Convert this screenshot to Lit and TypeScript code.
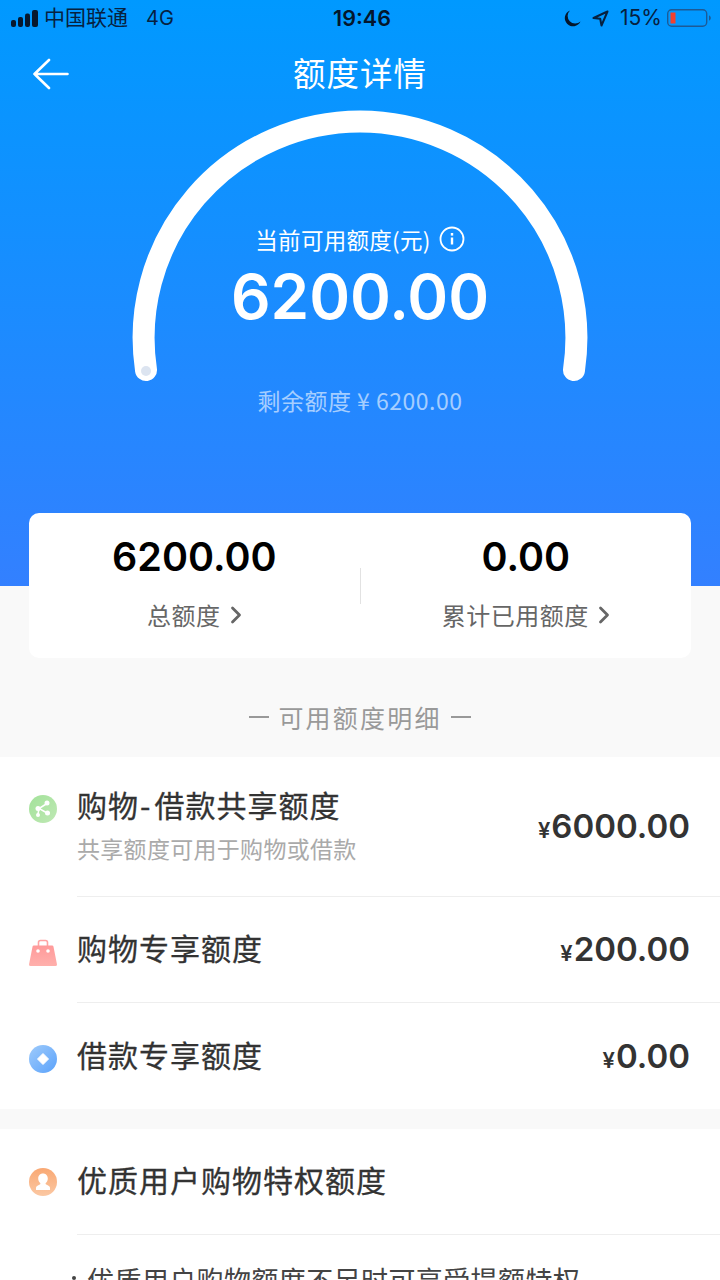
import { LitElement, css, html } from 'lit';
import { customElement } from 'lit/decorators.js';

@customElement('app-root')
export class AppRoot extends LitElement {
  static styles = css`
    :host {
      display: block;
      width: 720px;
      height: 1280px;
      overflow: hidden;
      background: #f9f9f9;
      font-family: "Noto Sans CJK SC", "Noto Sans", sans-serif;
    }

    .hero {
      height: 586px;
      background: linear-gradient(180deg, #0099ff 0%, #3380ff 100%);
    }

    .status {
      height: 36px;
      padding: 0 9px 0 11px;
      display: grid;
      grid-template-columns: 1fr auto 1fr;
      align-items: center;
      color: #07213f;
      font-size: 21px;
      line-height: 36px;
    }
    .status-left, .status-right {
      display: flex;
      align-items: center;
    }
    .status-right { justify-content: flex-end; }
    .signal { margin-right: 6px; }
    .carrier { line-height: 28px; margin-bottom: 4px; }
    .net { margin-left: 18px; font-family: Inter, sans-serif; font-size: 20px; }
    .time { font-family: Inter, sans-serif; font-size: 21.500px; font-weight: 600; color: #04162c; padding-left: 2px; }
    .pct { font-family: Inter, sans-serif; font-size: 21px; margin: 0 5px 0 11px; }
    .moon { margin-right: 11px; }

    .nav {
      height: 74px;
      padding-bottom: 4px;
      box-sizing: border-box;
      display: flex;
      align-items: center;
      justify-content: center;
      position: relative;
      color: #fff;
      font-size: 32.500px;
      letter-spacing: 1px;
    }
    .back {
      position: absolute;
      left: 33px;
      top: 22px;
    }

    .gauge {
      position: relative;
      height: 476px;
      color: #fff;
      text-align: center;
    }
    .arc {
      position: absolute;
      left: 0;
      top: 0;
    }
    .gauge-body {
      position: relative;
      padding-top: 111px;
    }
    .gauge-label {
      display: flex;
      justify-content: center;
      align-items: center;
      gap: 8px;
      font-size: 22.500px;
      letter-spacing: 0.3px;
      line-height: 36px;
    }
    .gauge-value {
      font-family: Inter, sans-serif;
      font-size: 62px;
      font-weight: 600;
      line-height: 76px;
      margin-top: 2px;
    }
    .gauge-rest {
      margin-top: 47px;
      font-size: 23px;
      letter-spacing: 0.5px;
      line-height: 36px;
      color: rgba(255, 255, 255, 0.6);
    }

    .card {
      margin: -73px 29px 0;
      height: 145px;
      position: relative;
      background: #fff;
      border-radius: 10px;
      display: flex;
      align-items: center;
    }
    .cell {
      flex: 1;
      display: flex;
      flex-direction: column;
      align-items: center;
      padding-bottom: 6px;
    }
    .cell-value {
      font-family: Inter, sans-serif;
      font-size: 39.500px;
      font-weight: 600;
      line-height: 50px;
      color: #000;
    }
    .cell-label {
      margin-top: 15px;
      display: flex;
      align-items: center;
      gap: 9px;
      font-size: 24px;
      letter-spacing: 0.5px;
      line-height: 36px;
      color: #666;
    }
    .vline {
      width: 1px;
      height: 36px;
      background: #e2e2e2;
    }

    .heading {
      height: 99px;
      display: flex;
      align-items: center;
      justify-content: center;
      gap: 9px;
      font-size: 25px;
      letter-spacing: 2.200px;
      color: #999;
      padding-top: 18px;
      box-sizing: border-box;
    }
    .dash {
      width: 20px;
      height: 2px;
      background: #999;
    }

    .group {
      background: #fff;
    }
    .group + .group { margin-top: 20px; }
    .row {
      display: flex;
      padding-left: 29px;
    }
    .row-icon {
      width: 28px;
      height: 28px;
      margin-right: 20px;
      flex: none;
    }
    .row-body {
      flex: 1;
      display: flex;
      align-items: center;
      justify-content: space-between;
      padding-right: 30px;
      height: 105px;
      border-bottom: 1px solid #eeeeee;
    }
    .row-last .row-body { border-bottom: 0; height: 106px; }
    .row-tall .row-body { height: 139px; }
    .row-icon-wrap { height: 105px; display: flex; align-items: center; box-sizing: border-box; }
    .row-tall .row-icon-wrap { height: 104px; }
    .row-mid .row-icon-wrap { padding-top: 6px; }
    .title {
      font-size: 30px;
      letter-spacing: 1px;
      line-height: 42px;
      color: #333;
      margin-top: -5px;
      -webkit-text-stroke: 0.3px #333;
    }
    .hyphen { letter-spacing: 4px; margin-left: 1px; }
    .sub {
      margin-top: 6px;
      font-size: 23px;
      letter-spacing: 0.3px;
      line-height: 34px;
      color: #aaa;
    }
    .amount {
      font-family: Inter, sans-serif;
      font-size: 33px;
      font-weight: 600;
      color: #333;
      line-height: 44px;
      margin-top: 3px;
    }
    .amount small {
      font-size: 22px;
      font-weight: 600;
      margin-right: 1px;
    }
    .note {
      position: relative;
      margin: 25px 0 0 87px;
      font-size: 27px;
      letter-spacing: 0.4px;
      line-height: 40px;
      color: #444;
      white-space: nowrap;
    }
    .note::before {
      content: "";
      position: absolute;
      left: -15px;
      top: 16px;
      width: 4px;
      height: 4px;
      border-radius: 50%;
      background: #444;
    }
  `;

  renderStatus() {
    return html`
      <div class="status">
        <div class="status-left">
          <svg class="signal" width="27" height="17" viewBox="0 0 27 17" fill="#07182e">
            <rect x="0" y="10" width="5" height="7" rx="2"></rect>
            <rect x="7" y="7" width="5" height="10" rx="2"></rect>
            <rect x="14" y="3.500" width="5" height="13.500" rx="2"></rect>
            <rect x="21" y="0" width="6" height="17" rx="2"></rect>
          </svg>
          <span class="carrier">中国联通</span>
          <span class="net">4G</span>
        </div>
        <div class="time">19:46</div>
        <div class="status-right">
          <svg class="moon" width="17" height="17" viewBox="0 0 17 17" fill="#04162c">
            <path d="M6 0.500A8.200 8.200 0 1 0 16.500 11.500 7.600 7.600 0 0 1 6 0.500Z"></path>
          </svg>
          <svg width="17" height="17" viewBox="0 0 17 17" fill="none" stroke="#07213f" stroke-width="2" stroke-linejoin="round">
            <path d="M15.500 1.500 1.500 8 8.200 8.800 9.500 15.500Z"></path>
          </svg>
          <span class="pct">15%</span>
          <svg width="44" height="18" viewBox="0 0 44 18">
            <rect x="0.700" y="0.700" width="39" height="16.600" rx="4" fill="none" stroke="#1d5a96" stroke-width="1.400"></rect>
            <rect x="3.500" y="3.500" width="5" height="11" fill="#f2402f"></rect>
            <path d="M42 6.500c1.200.3 1.800 1.300 1.800 2.500s-.6 2.200-1.800 2.500Z" fill="#1d5a96"></path>
          </svg>
        </div>
      </div>
    `;
  }

  renderGauge() {
    return html`
      <div class="gauge">
        <svg class="arc" width="720" height="300" viewBox="0 0 720 300">
          <path d="M146 260 A216.400 216.400 0 1 1 574 260" fill="none" stroke="#fff" stroke-width="22" stroke-linecap="round"></path>
          <circle cx="146" cy="261" r="5" fill="#dce4f0"></circle>
        </svg>
        <div class="gauge-body">
          <div class="gauge-label">
            <span>当前可用额度(元)</span>
            <svg width="26" height="26" viewBox="0 0 26 26" fill="none" stroke="#fff">
              <circle cx="13" cy="13" r="11.500" stroke-width="1.800"></circle>
              <path d="M13 11.500v7" stroke-width="2.400"></path>
              <path d="M13 7v2.600" stroke-width="2.400"></path>
            </svg>
          </div>
          <div class="gauge-value">6200.00</div>
          <div class="gauge-rest">剩余额度 ¥ 6200.00</div>
        </div>
      </div>
    `;
  }

  chevron() {
    return html`
      <svg width="12" height="18" viewBox="0 0 12 18" fill="none" stroke="#666" stroke-width="2.800" stroke-linecap="round" stroke-linejoin="round">
        <path d="M2.500 2 9.500 9 2.500 16"></path>
      </svg>
    `;
  }

  iconShare() {
    return html`
      <svg class="row-icon" viewBox="0 0 28 28">
        <defs><linearGradient id="g1" x1="0" y1="0" x2="1" y2="1"><stop offset="0" stop-color="#a3e29a"></stop><stop offset="1" stop-color="#bfe8b4"></stop></linearGradient></defs>
        <circle cx="14" cy="14" r="14" fill="url(#g1)"></circle>
        <path d="M18 8.500 10 13.500 18 18M10 13.500 9 19" fill="none" stroke="#fff" stroke-width="1.500"></path>
        <circle cx="18" cy="8" r="2.500" fill="#fff"></circle>
        <circle cx="9" cy="13.500" r="2.500" fill="#fff"></circle>
        <circle cx="18.500" cy="18" r="2.500" fill="#fff"></circle>
        <circle cx="9" cy="20" r="2" fill="#fff"></circle>
      </svg>
    `;
  }

  iconBag() {
    return html`
      <svg class="row-icon" viewBox="0 0 28 28">
        <defs><linearGradient id="g2" x1="0" y1="0" x2="0" y2="1"><stop offset="0" stop-color="#ff9a9a"></stop><stop offset="1" stop-color="#ffb0ac"></stop></linearGradient></defs>
        <path d="M9.500 8V3.500a2 2 0 0 1 2-2h5a2 2 0 0 1 2 2V8" fill="none" stroke="#ffa3a3" stroke-width="1.600"></path>
        <path d="M5 6.500h18a1.500 1.500 0 0 1 1.500 1.300L28 25.500a1.500 1.500 0 0 1-1.500 1.500h-25A1.500 1.500 0 0 1 0 25.500L3.500 7.800A1.500 1.500 0 0 1 5 6.500Z" fill="url(#g2)"></path>
        <circle cx="9" cy="12" r="1.800" fill="#fff"></circle>
        <circle cx="19" cy="12" r="1.800" fill="#fff"></circle>
      </svg>
    `;
  }

  iconDiamond() {
    return html`
      <svg class="row-icon" viewBox="0 0 28 28">
        <defs><linearGradient id="g3" x1="0" y1="0" x2="1" y2="1"><stop offset="0" stop-color="#9fcbfb"></stop><stop offset="1" stop-color="#5aa2fb"></stop></linearGradient></defs>
        <circle cx="14" cy="14" r="14" fill="url(#g3)"></circle>
        <path d="M14 8.500 19.500 14 14 19.500 8.500 14Z" fill="#fff" stroke="#fff" stroke-linejoin="round"></path>
      </svg>
    `;
  }

  iconUser() {
    return html`
      <svg class="row-icon" viewBox="0 0 28 28">
        <defs><linearGradient id="g4" x1="0" y1="0" x2="0" y2="1"><stop offset="0" stop-color="#f9a873"></stop><stop offset="1" stop-color="#fbc8a3"></stop></linearGradient></defs>
        <circle cx="14" cy="14" r="14" fill="url(#g4)"></circle>
        <path d="M14 5.500c3 0 4.800 2.200 4.800 5 0 2-1 3.600-2 4.400-.5.500-.2 1.200.4 1.500 2 .9 3.800 1.800 3.800 3.400V22H7v-2.200c0-1.600 1.800-2.500 3.800-3.400.6-.3.900-1 .4-1.500-1-.8-2-2.400-2-4.400 0-2.800 1.800-5 4.800-5Z" fill="#fff"></path>
      </svg>
    `;
  }

  render() {
    return html`
      <div class="hero">
        ${this.renderStatus()}
        <div class="nav">
          <svg class="back" width="36" height="32" viewBox="0 0 36 32" fill="none" stroke="#fff" stroke-width="2.600" stroke-linecap="round" stroke-linejoin="round">
            <path d="M1.500 16H34.500M16 2 1.500 16 16 30"></path>
          </svg>
          额度详情
        </div>
        ${this.renderGauge()}
      </div>

      <div class="card">
        <div class="cell">
          <div class="cell-value">6200.00</div>
          <div class="cell-label">总额度 ${this.chevron()}</div>
        </div>
        <div class="vline"></div>
        <div class="cell">
          <div class="cell-value">0.00</div>
          <div class="cell-label">累计已用额度 ${this.chevron()}</div>
        </div>
      </div>

      <div class="heading"><span class="dash"></span>可用额度明细<span class="dash"></span></div>

      <div class="group">
        <div class="row row-tall">
          <div class="row-icon-wrap">${this.iconShare()}</div>
          <div class="row-body">
            <div>
              <div class="title">购物<span class="hyphen">-</span>借款共享额度</div>
              <div class="sub">共享额度可用于购物或借款</div>
            </div>
            <div class="amount"><small>¥</small>6000.00</div>
          </div>
        </div>
        <div class="row row-mid">
          <div class="row-icon-wrap">${this.iconBag()}</div>
          <div class="row-body">
            <div class="title">购物专享额度</div>
            <div class="amount"><small>¥</small>200.00</div>
          </div>
        </div>
        <div class="row row-mid row-last">
          <div class="row-icon-wrap">${this.iconDiamond()}</div>
          <div class="row-body">
            <div class="title">借款专享额度</div>
            <div class="amount"><small>¥</small>0.00</div>
          </div>
        </div>
      </div>

      <div class="group">
        <div class="row">
          <div class="row-icon-wrap">${this.iconUser()}</div>
          <div class="row-body">
            <div class="title">优质用户购物特权额度</div>
          </div>
        </div>
        <div class="note">优质用户购物额度不足时可享受提额特权</div>
      </div>
    `;
  }
}
